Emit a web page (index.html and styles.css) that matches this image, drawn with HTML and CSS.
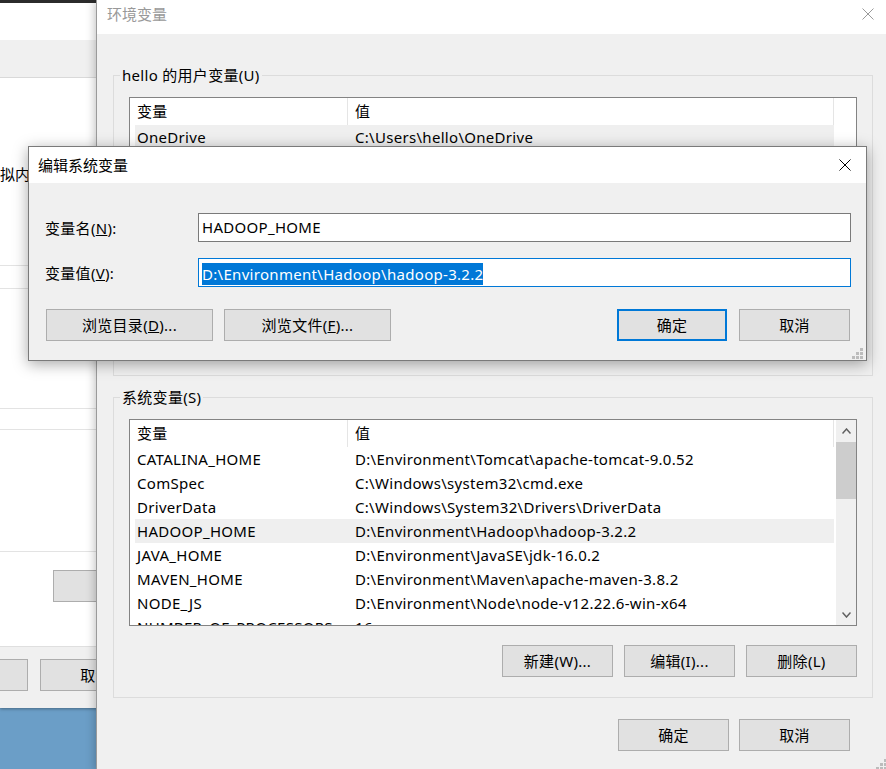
FILE: index.html
```html
<!DOCTYPE html>
<html lang="zh-CN">
<head>
  <meta charset="UTF-8">
  <title>环境变量</title>
  <link rel="stylesheet" href="styles.css">
</head>
<body>
  <div class="desktop">

    <!-- System properties window behind -->
    <div class="bg-window">
      <div class="bg-strip"></div>
      <div class="bg-caption"></div>
      <div class="bg-tabs"></div>
      <div class="bg-panel">
        <div class="bg-text">虚拟内存</div>
        <div class="bg-rule r1"></div>
        <div class="bg-rule r2"></div>
        <div class="bg-rule r3"></div>
        <div class="bg-rule r4"></div>
        <div class="bg-rule r5"></div>
        <button class="btn bg-btn"></button>
        <div class="bg-footer">
          <button class="btn first">确定</button>
          <button class="btn">取消</button>
        </div>
      </div>
    </div>

    <!-- Environment variables window -->
    <div class="env-window">
      <div class="titlebar inactive">
        <span class="title">环境变量</span>
        <span class="close">
          <svg width="12" height="12" viewBox="0 0 12 12"><path d="M0.5 0.5L11.5 11.5M11.5 0.5L0.5 11.5" stroke="#9a9a9a" stroke-width="1"/></svg>
        </span>
      </div>
      <div class="env-body">
        <fieldset class="group">
          <legend>hello 的用户变量(U)</legend>
          <div class="listview">
            <div class="lv-main">
              <div class="lv-header"><span class="col-name">变量</span><span class="col-value">值</span></div>
              <div class="lv-row selected"><span class="col-name">OneDrive</span><span class="col-value">C:\Users\hello\OneDrive</span></div>
              <div class="lv-row"><span class="col-name">Path</span><span class="col-value">C:\Users\hello\AppData\Local\Microsoft\WindowsApps;</span></div>
              <div class="lv-row"><span class="col-name">TEMP</span><span class="col-value">C:\Users\hello\AppData\Local\Temp</span></div>
              <div class="lv-row"><span class="col-name">TMP</span><span class="col-value">C:\Users\hello\AppData\Local\Temp</span></div>
            </div>
            <div class="sb-blank"></div>
          </div>
          <div class="btn-row">
            <button class="btn">新建(N)...</button>
            <button class="btn">编辑(E)...</button>
            <button class="btn">删除(D)</button>
          </div>
        </fieldset>

        <fieldset class="group sys-group">
          <legend>系统变量(S)</legend>
          <div class="listview">
            <div class="lv-main">
              <div class="lv-header"><span class="col-name">变量</span><span class="col-value">值</span></div>
              <div class="lv-row"><span class="col-name">CATALINA_HOME</span><span class="col-value">D:\Environment\Tomcat\apache-tomcat-9.0.52</span></div>
              <div class="lv-row"><span class="col-name">ComSpec</span><span class="col-value">C:\Windows\system32\cmd.exe</span></div>
              <div class="lv-row"><span class="col-name">DriverData</span><span class="col-value">C:\Windows\System32\Drivers\DriverData</span></div>
              <div class="lv-row selected"><span class="col-name">HADOOP_HOME</span><span class="col-value">D:\Environment\Hadoop\hadoop-3.2.2</span></div>
              <div class="lv-row"><span class="col-name">JAVA_HOME</span><span class="col-value">D:\Environment\JavaSE\jdk-16.0.2</span></div>
              <div class="lv-row"><span class="col-name">MAVEN_HOME</span><span class="col-value">D:\Environment\Maven\apache-maven-3.8.2</span></div>
              <div class="lv-row"><span class="col-name">NODE_JS</span><span class="col-value">D:\Environment\Node\node-v12.22.6-win-x64</span></div>
              <div class="lv-row"><span class="col-name">NUMBER_OF_PROCESSORS</span><span class="col-value">16</span></div>
            </div>
            <div class="scrollbar">
              <span class="sb-arrow">
                <svg width="9" height="6" viewBox="0 0 9 6"><path d="M0.5 5.5L4.5 1L8.5 5.5" fill="none" stroke="#606060" stroke-width="1.5"/></svg>
              </span>
              <span class="sb-thumb"></span>
              <span class="sb-track"></span>
              <span class="sb-arrow">
                <svg width="9" height="6" viewBox="0 0 9 6"><path d="M0.5 0.5L4.5 5L8.5 0.5" fill="none" stroke="#606060" stroke-width="1.5"/></svg>
              </span>
            </div>
          </div>
          <div class="btn-row">
            <button class="btn">新建(W)...</button>
            <button class="btn">编辑(I)...</button>
            <button class="btn">删除(L)</button>
          </div>
        </fieldset>

        <div class="env-footer">
          <button class="btn">确定</button>
          <button class="btn">取消</button>
        </div>
      </div>
      <svg class="grip" width="11" height="11" viewBox="0 0 11 11"><g fill="#bcbcbc"><rect x="8" y="0" width="3" height="3"/><rect x="4" y="4" width="3" height="3"/><rect x="8" y="4" width="3" height="3"/><rect x="0" y="8" width="3" height="3"/><rect x="4" y="8" width="3" height="3"/><rect x="8" y="8" width="3" height="3"/></g></svg>
    </div>

    <!-- Edit system variable dialog -->
    <div class="edit-dialog">
      <div class="titlebar">
        <span class="title">编辑系统变量</span>
        <span class="close">
          <svg width="12" height="12" viewBox="0 0 12 12"><path d="M0.5 0.5L11.5 11.5M11.5 0.5L0.5 11.5" stroke="#000" stroke-width="1"/></svg>
        </span>
      </div>
      <div class="dlg-body">
        <div class="field">
          <label>变量名(<u>N</u>):</label>
          <div class="textbox">HADOOP_HOME</div>
        </div>
        <div class="field">
          <label>变量值(<u>V</u>):</label>
          <div class="textbox focused"><span class="selection">D:\Environment\Hadoop\hadoop-3.2.2</span></div>
        </div>
        <div class="dlg-buttons">
          <button class="btn wide">浏览目录(<u>D</u>)...</button>
          <button class="btn wide">浏览文件(<u>F</u>)...</button>
          <span class="spacer"></span>
          <button class="btn default">确定</button>
          <button class="btn">取消</button>
        </div>
      </div>
      <svg class="grip" width="11" height="11" viewBox="0 0 11 11"><g fill="#bcbcbc"><rect x="8" y="0" width="3" height="3"/><rect x="4" y="4" width="3" height="3"/><rect x="8" y="4" width="3" height="3"/><rect x="0" y="8" width="3" height="3"/><rect x="4" y="8" width="3" height="3"/><rect x="8" y="8" width="3" height="3"/></g></svg>
    </div>

  </div>
</body>
</html>
```

FILE: styles.css
```css
* {
  box-sizing: border-box;
}

body {
  margin: 0;
  font-family: "Noto Sans", "Noto Sans CJK SC", sans-serif;
  font-size: 15px;
  letter-spacing: 0.3px;
  color: #000;
}

.desktop {
  position: relative;
  width: 886px;
  height: 769px;
  overflow: hidden;
  background-color: #6b9ec7;
}

/* Buttons */
.btn {
  width: 111px;
  height: 32px;
  padding: 0;
  font: inherit;
  letter-spacing: inherit;
  line-height: 30px;
  color: #000;
  text-align: center;
  background-color: #e1e1e1;
  border: 1px solid #adadad;
  white-space: nowrap;
}

.btn.default {
  border: 2px solid #0078d7;
  line-height: 28px;
}

/* Title bars */
.titlebar {
  display: flex;
  justify-content: space-between;
  align-items: center;
  background-color: #fff;
  flex-shrink: 0;
}

.titlebar .title {
  line-height: 20px;
  letter-spacing: 0;
}

.titlebar .close svg {
  display: block;
}

.grip {
  position: absolute;
}

/* Window behind */
.bg-window {
  position: absolute;
  left: 0;
  top: 0;
  width: 240px;
  height: 708px;
  background-color: #fff;
  display: flex;
  flex-direction: column;
  box-shadow: 0 1px 3px rgba(0, 0, 0, 0.35);
}

.bg-strip {
  height: 3px;
  background-color: #2b2b2b;
}

.bg-caption {
  height: 37px;
}

.bg-tabs {
  height: 38px;
  background-color: #f0f0f0;
  border-bottom: 1px solid #d9d9d9;
}

.bg-panel {
  flex: 1;
  display: flex;
  flex-direction: column;
  overflow: hidden;
}

.bg-text {
  margin-top: 86px;
  line-height: 20px;
  letter-spacing: 0;
  text-indent: -15px;
  white-space: nowrap;
}

.bg-rule {
  border-top: 1px solid #e3e3e3;
}

.bg-rule.r1 { margin-top: 81px; }
.bg-rule.r2 { margin-top: 22px; }
.bg-rule.r3 { margin-top: 119px; }
.bg-rule.r4 { margin-top: 20px; }
.bg-rule.r5 { margin-top: 121px; }

.bg-btn {
  width: 170px;
  margin-top: 18px;
  margin-left: 53px;
}

.bg-footer {
  margin-top: auto;
  height: 62px;
  padding-top: 12px;
  background-color: #f0f0f0;
  border-top: 1px solid #dfdfdf;
  display: flex;
  gap: 12px;
}

.bg-footer .first {
  margin-left: -83px;
}

/* Environment variables window */
.env-window {
  position: absolute;
  left: 96px;
  top: 0;
  width: 794px;
  height: 772px;
  background-color: #f0f0f0;
  border: 1px solid #9a9a9a;
  border-top: 0;
  box-shadow: 0 0 10px rgba(0, 0, 0, 0.3);
  display: flex;
  flex-direction: column;
}

.env-window .titlebar {
  height: 34px;
  align-items: flex-start;
}

.env-window .titlebar .title {
  padding: 4px 0 0 10px;
  color: #999;
}

.env-window .titlebar .close {
  width: 42px;
  padding-top: 8px;
  display: flex;
  justify-content: center;
}

.env-window .grip {
  right: 2px;
  bottom: 1px;
}

.env-body {
  padding: 31px 16px 0;
}

.group {
  margin: 0;
  padding: 0 15px 20px;
  min-width: 0;
  border: 1px solid #dcdcdc;
}

.group legend {
  padding: 0 2px;
  margin-left: -9px;
  line-height: 20px;
}

.sys-group {
  margin-top: 11px;
}

.listview {
  margin-top: 12px;
  height: 207px;
  border: 1px solid #838383;
  background-color: #fff;
  display: flex;
}

.lv-main {
  flex: 1;
  min-width: 0;
  overflow: hidden;
  padding-right: 2px;
}

.lv-header {
  display: flex;
  height: 27px;
  line-height: 27px;
}

.lv-header .col-name {
  width: 218px;
  padding-left: 7px;
  border-right: 1px solid #e5e5e5;
}

.lv-header .col-value {
  flex: 1;
  padding-left: 7px;
  border-right: 1px solid #e5e5e5;
}

.lv-row {
  display: flex;
  height: 24px;
  line-height: 24px;
  margin-left: 5px;
  white-space: nowrap;
}

.lv-row.selected {
  background-color: #efefef;
}

.lv-row .col-name {
  width: 212px;
  padding-left: 2px;
  flex-shrink: 0;
  overflow: hidden;
}

.lv-row .col-value {
  padding-left: 8px;
}

.sb-blank {
  width: 20px;
}

.scrollbar {
  width: 20px;
  background-color: #f0f0f0;
  display: flex;
  flex-direction: column;
}

.sb-arrow {
  height: 21px;
  display: flex;
  align-items: center;
  justify-content: center;
}

.sb-thumb {
  height: 57px;
  margin-top: 1px;
  background-color: #cdcdcd;
}

.sb-track {
  flex: 1;
}

.btn-row {
  display: flex;
  justify-content: flex-end;
  gap: 11px;
  margin-top: 19px;
}

.env-footer {
  display: flex;
  justify-content: flex-end;
  gap: 10px;
  margin-top: 21px;
  padding-right: 23px;
}

/* Edit dialog */
.edit-dialog {
  position: absolute;
  left: 28px;
  top: 146px;
  width: 839px;
  height: 215px;
  background-color: #f0f0f0;
  border: 1px solid #7a7a7a;
  box-shadow: 0 3px 14px rgba(0, 0, 0, 0.35);
  display: flex;
  flex-direction: column;
}

.edit-dialog .titlebar {
  height: 36px;
  padding: 0 15px 0 9px;
}

.edit-dialog .grip {
  right: 3px;
  bottom: 1px;
}

.dlg-body {
  padding: 30px 15px 0 16px;
}

.field {
  display: grid;
  grid-template-columns: 153px 1fr;
  align-items: center;
}

.field + .field {
  margin-top: 16px;
}

.textbox {
  height: 29px;
  line-height: 27px;
  padding-left: 3px;
  background-color: #fff;
  border: 1px solid #7a7a7a;
  white-space: nowrap;
}

.textbox.focused {
  border-color: #0078d7;
}

.textbox .selection {
  display: inline-block;
  line-height: 22px;
  background-color: #0078d7;
  color: #fff;
  vertical-align: middle;
}

.dlg-buttons {
  display: flex;
  gap: 11px;
  margin-top: 22px;
  padding: 0 1px;
}

.dlg-buttons .wide {
  width: 167px;
}

.dlg-buttons .default {
  width: 110px;
  margin-right: 1px;
}

.spacer {
  flex: 1;
}
```
